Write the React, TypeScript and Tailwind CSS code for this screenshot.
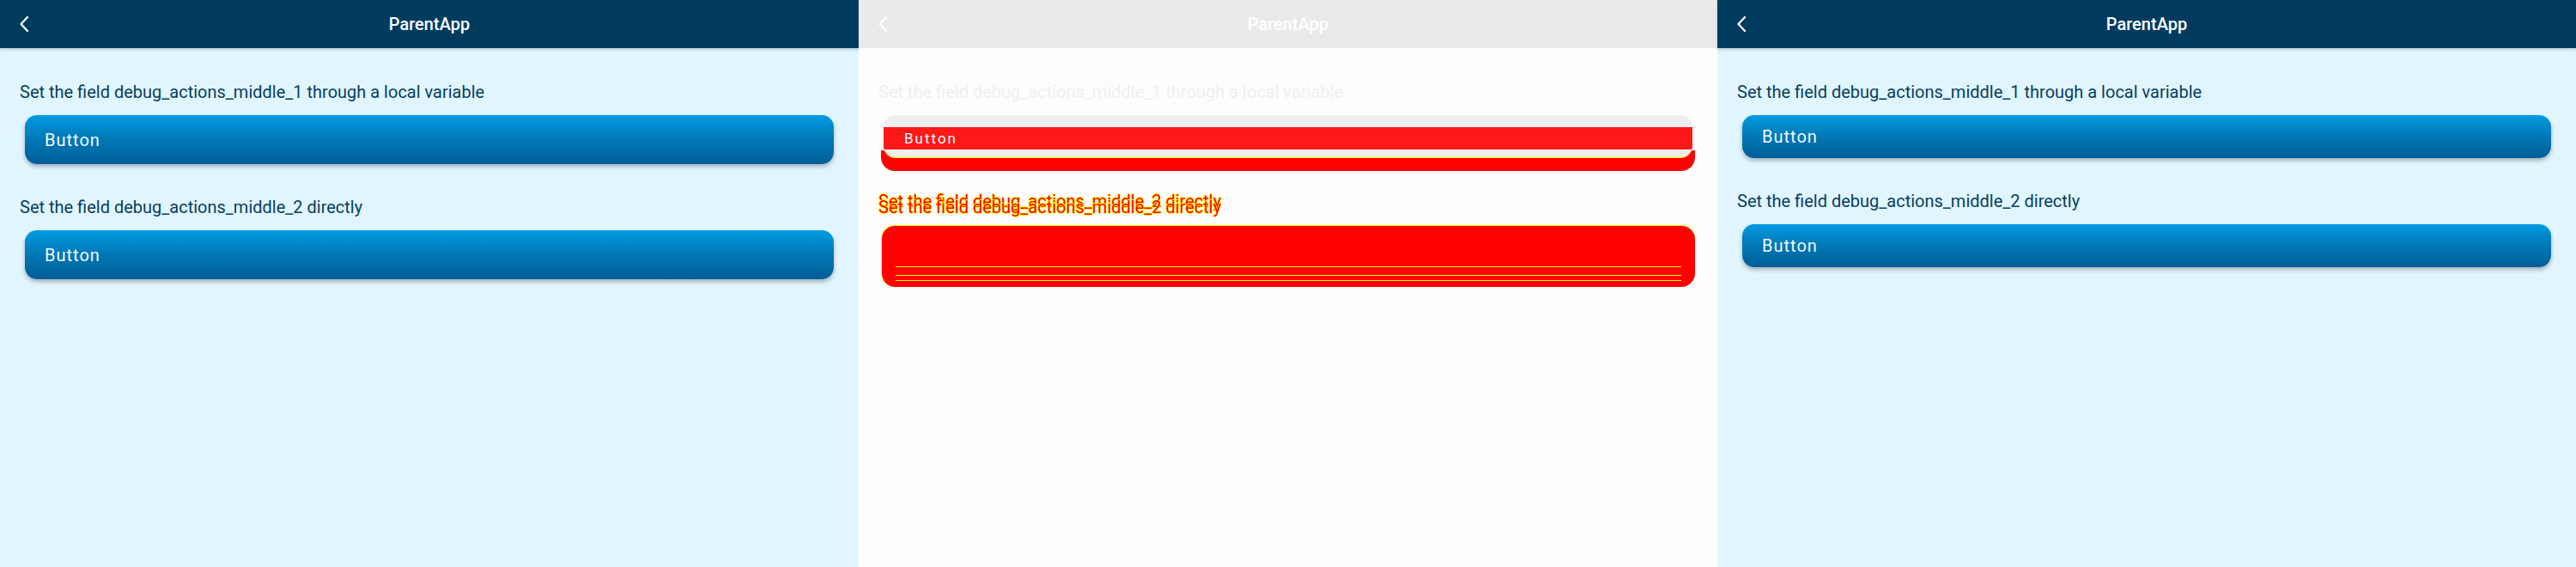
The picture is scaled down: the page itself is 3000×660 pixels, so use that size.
import React from "react";

const font = { fontFamily: "Roboto, 'Noto Sans', sans-serif" };

type ScreenProps = {
	buttonHeight: string;
};

function BackChevron({ color }: { color: string }) {
	return (
		<svg width="12" height="18" viewBox="0 0 12 18" className="ml-[22px]">
			<polyline points="10,1 2.5,9 10,17" fill="none" stroke={color} strokeWidth="2.2" strokeLinecap="round" strokeLinejoin="round" />
		</svg>
	);
}

function Header({ bg, fg, shadow }: { bg: string; fg: string; shadow: boolean }) {
	return (
		<div className={`relative flex h-[56px] items-center ${bg} ${shadow ? "shadow-[0_2px_3px_rgba(0,40,70,0.18)]" : ""}`}>
			<BackChevron color={fg} />
			<div className="absolute inset-0 flex items-center justify-center text-[20px] font-medium text-white">ParentApp</div>
		</div>
	);
}

function AppButton({ h }: { h: string }) {
	return (
		<div
			className={`mx-[29px] flex ${h} items-center rounded-[14px] bg-gradient-to-b from-[#039be3] via-[#0178b5] to-[#005d98] pl-[23px] text-[20px] tracking-[1px] text-[#f2f9fd] shadow-[0_3px_5px_rgba(0,0,0,0.28)]`}
		>
			Button
		</div>
	);
}

function Screen({ buttonHeight }: ScreenProps) {
	return (
		<div className="flex h-[660px] w-[1000px] flex-col bg-[#e1f5fe]" style={font}>
			<Header bg="bg-[#013c5f]" fg="#ffffff" shadow />
			<div className="flex flex-col pt-[39px] text-[20px] leading-[24px] text-[#063e5e]">
				<p className="pl-[23px]">Set the field debug_actions_middle_1 through a local variable</p>
				<div className="mt-[15px]">
					<AppButton h={buttonHeight} />
				</div>
				<p className="mt-[38px] pl-[23px]">Set the field debug_actions_middle_2 directly</p>
				<div className="mt-[15px]">
					<AppButton h={buttonHeight} />
				</div>
			</div>
		</div>
	);
}

// red glyphs with a thin yellow rim, like the pixel diff
const diffText = "[text-shadow:0.6px_0_#ffff00,-0.6px_0_#ffff00,0_0.6px_#ffff00,0_-0.6px_#ffff00]";

function DiffScreen() {
	return (
		<div className="flex h-[660px] w-[1000px] flex-col bg-[#fdfdfd]" style={font}>
			<Header bg="bg-[#eaeaea]" fg="#ffffff" shadow={false} />
			<div className="flex flex-col pt-[39px] text-[20px] leading-[24px]">
				<p className="pl-[23px] text-[#efefef]">Set the field debug_actions_middle_1 through a local variable</p>

				{/* first button: shifted bottom edge */}
				<div className="relative mx-[26px] mt-[15px] h-[65px]">
					<div className="absolute inset-x-0 bottom-0 top-[41px] rounded-b-[16px] bg-[#ff0000]" />
					<div className="relative mx-[3px] flex h-[50px] flex-col overflow-hidden rounded-[14px] border-b border-[#ffff00] bg-[#efefef]">
						<div className="mt-[14px] flex h-[26px] items-center bg-[#ff0000] pl-[24px] text-[17px] tracking-[2px] text-white opacity-90">
							Button
						</div>
					</div>
				</div>

				{/* second label: drawn twice, 7px apart */}
				<div className={`relative mt-[23px] h-[31px] pl-[23px] text-[#ff0000] ${diffText}`}>
					<p>Set the field debug_actions_middle_2 directly</p>
					<p className="absolute left-[23px] top-[7px]">Set the field debug_actions_middle_2 directly</p>
				</div>

				{/* second button */}
				<div className="mx-[26px] mt-[9px] flex h-[72px] flex-col rounded-[16px] border-l border-t border-[#ffff00] bg-[#ff0000]">
					<div className="mt-[47px] mx-[16px] h-px bg-[#ffff00]" />
					<div className="mt-[9px] mx-[16px] h-px bg-[#ffff00]" />
					<div className="mt-[5px] mx-[16px] h-px bg-[#ffff00]" />
				</div>
			</div>
		</div>
	);
}

export default function App() {
	return (
		<div className="flex h-[660px] w-[3000px] overflow-hidden">
			<Screen buttonHeight="h-[57px]" />
			<DiffScreen />
			<Screen buttonHeight="h-[50px]" />
		</div>
	);
}
